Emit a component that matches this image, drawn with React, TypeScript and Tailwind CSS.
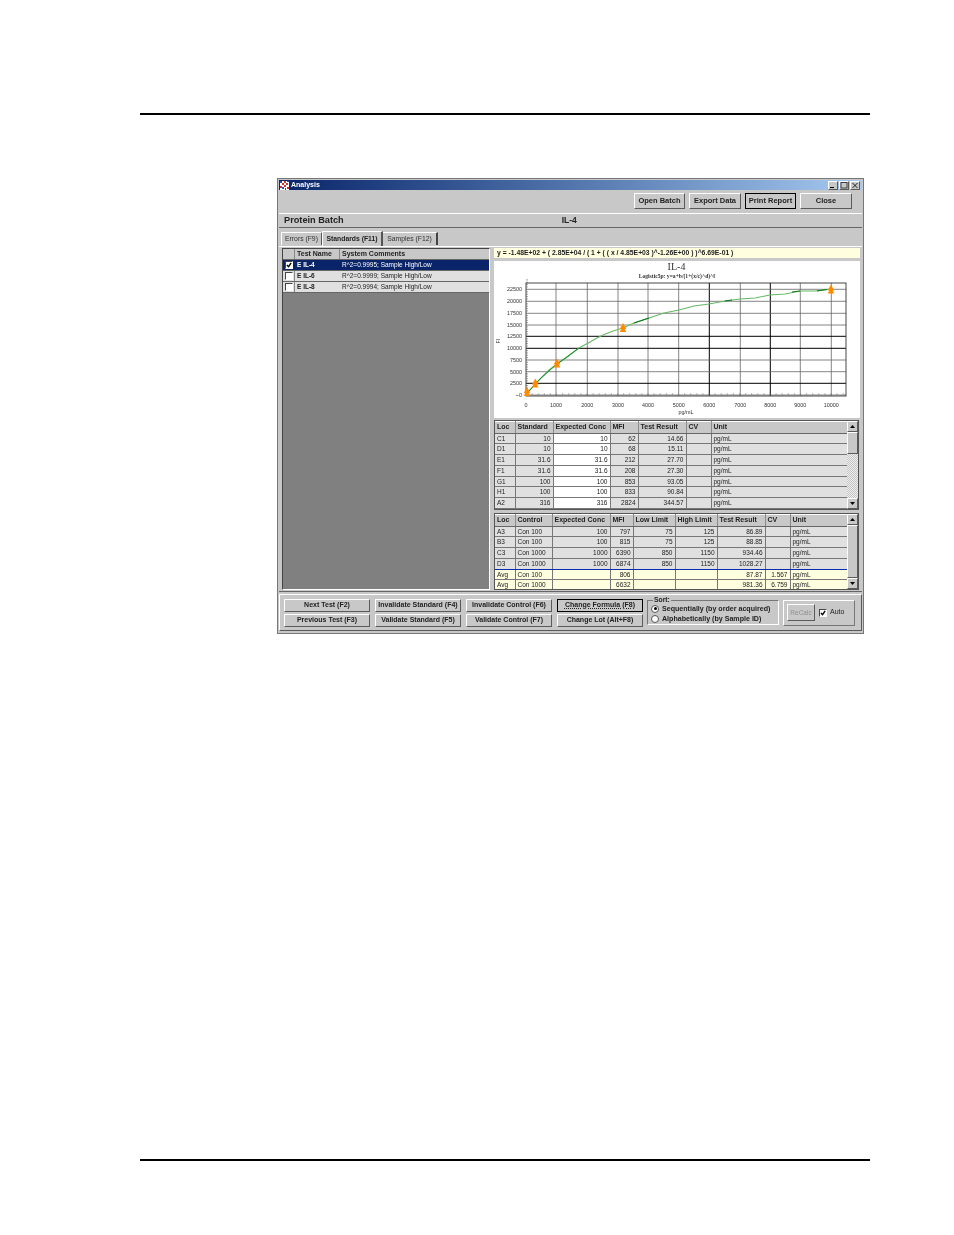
import React from 'react';

const bevel = 'border border-t-white border-l-white border-r-[#5a5a5a] border-b-[#5a5a5a]';
const sunken = 'border border-t-[#444] border-l-[#444] border-r-white border-b-white';

const Btn: React.FC<{ label: string; w: string; cls?: string }> = ({ label, w, cls = '' }) => (
  <div className={`${w} h-[16px] shrink-0 flex items-center justify-center bg-[#c8c8c8] font-bold text-[7.5px] text-[#222] ${bevel} ${cls}`}>
    {label}
  </div>
);

const SmallBtn: React.FC<{ label: string; cls?: string }> = ({ label, cls = '' }) => (
  <div className={`w-[86px] h-[13px] flex items-center justify-center bg-[#c8c8c8] font-bold text-[7px] text-[#222] ${bevel} ${cls}`}>
    {label}
  </div>
);

const WinCtl: React.FC<{ children: React.ReactNode }> = ({ children }) => (
  <div className={`w-[10px] h-[9px] bg-[#c8c8c8] flex items-center justify-center ${bevel}`}>
    <svg width="8" height="7" viewBox="0 0 8 7">{children}</svg>
  </div>
);

const Arrow: React.FC<{ up?: boolean }> = ({ up }) => (
  <div className={`h-[11px] shrink-0 bg-[#c8c8c8] flex items-center justify-center ${bevel}`}>
    <svg width="5" height="3" viewBox="0 0 5 3">
      <path d={up ? 'M2.5 0 L5 3 L0 3 Z' : 'M0 0 L5 0 L2.5 3 Z'} fill="#000" />
    </svg>
  </div>
);

const cell = 'border-r border-b border-[#777] px-[2px] h-[10.75px] leading-[9.7px] overflow-hidden whitespace-nowrap text-[6.5px] text-[#222]';
const head = 'border-r border-[#8a8a8a] px-[2px] h-[11px] text-left font-bold text-[7px] text-[#222] bg-[#c8c8c8] border-t border-t-white border-b border-b-[#666] whitespace-nowrap overflow-hidden';

const standards = [
  ['C1', '10', '10', '62', '14.66', '', 'pg/mL'],
  ['D1', '10', '10', '68', '15.11', '', 'pg/mL'],
  ['E1', '31.6', '31.6', '212', '27.70', '', 'pg/mL'],
  ['F1', '31.6', '31.6', '208', '27.30', '', 'pg/mL'],
  ['G1', '100', '100', '853', '93.05', '', 'pg/mL'],
  ['H1', '100', '100', '833', '90.84', '', 'pg/mL'],
  ['A2', '316', '316', '2824', '344.57', '', 'pg/mL'],
  ['', '', '', '', '', '', ''],
];

const controls = [
  ['A3', 'Con 100', '100', '797', '75', '125', '86.89', '', 'pg/mL'],
  ['B3', 'Con 100', '100', '815', '75', '125', '88.85', '', 'pg/mL'],
  ['C3', 'Con 1000', '1000', '6390', '850', '1150', '934.46', '', 'pg/mL'],
  ['D3', 'Con 1000', '1000', '6874', '850', '1150', '1028.27', '', 'pg/mL'],
  ['Avg', 'Con 100', '', '806', '', '', '87.87', '1.567', 'pg/mL'],
  ['Avg', 'Con 1000', '', '6632', '', '', '981.36', '6.759', 'pg/mL'],
];

const xLines = [556, 587.3, 618, 648, 678.7, 709.3, 740.3, 770.3, 800.3, 831.3];
const xBlack = [709.3, 770.3];
const yLines: [number, string, boolean][] = [
  [289.3, '22500', false],
  [301.3, '20000', false],
  [313.3, '17500', false],
  [325, '15000', false],
  [336.3, '12500', true],
  [348.3, '10000', true],
  [360, '7500', false],
  [371.7, '5000', false],
  [383.3, '2500', true],
  [395, '0', false],
];
const curve = '527,393 531,389 535,384 541,378 549,370 557,364 566,358 579,348 590,342 595,339 603,335 613,331 623,328 634,323 649,318 664,313 679,310 694,306 709,304 725,301 740,299 755,298 770,295 785,294 800,291 815,291 831,289';
const marks: [number, number][] = [[527, 392], [535.3, 383.5], [557, 363.5], [623, 328], [831, 289.5]];

const Chart: React.FC = () => {
  const ticks: number[] = [];
  for (let x = 526; x < 846; x += 6.1) ticks.push(x);
  return (
    <svg viewBox="494 261 366 157" className="w-[366px] h-[157px] block bg-white">
      {xLines.map(x => (
        <line key={x} x1={x} x2={x} y1={283} y2={396} stroke={xBlack.includes(x) ? '#000' : '#666'} strokeWidth={xBlack.includes(x) ? 1 : 0.8} />
      ))}
      {yLines.map(([y, , black]) => (
        <line key={y} x1={526} x2={846} y1={y} y2={y} stroke={black ? '#000' : '#666'} strokeWidth={black ? 1 : 0.8} />
      ))}
      <rect x={526} y={283} width={320} height={113} fill="none" stroke="#333" strokeWidth={0.9} />
      {ticks.map(x => (
        <line key={x} x1={x} x2={x} y1={395.5} y2={393} stroke="#777" strokeWidth={0.5} />
      ))}
      {yLines.map(([y]) => [2.35, 4.7, 7.05, 9.4].map(d => (
        <line key={`${y}-${d}`} x1={526} x2={528} y1={y - d} y2={y - d} stroke="#444" strokeWidth={0.5} />
      )))}
      <polyline points={curve} fill="none" stroke="#66b866" strokeWidth={1.1} />
      <polyline points="527,393 541,378 557,364 579,348" fill="none" stroke="#1a8a2a" strokeWidth={1} />
      <polyline points="634,323 649,318" fill="none" stroke="#0a7a1a" strokeWidth={1.1} />
      <polyline points="725,301 732,300" fill="none" stroke="#0a7a1a" strokeWidth={1.1} />
      <polyline points="792,292 800,291" fill="none" stroke="#0a7a1a" strokeWidth={1.1} />
      <polyline points="817,291 827,289.5" fill="none" stroke="#0a7a1a" strokeWidth={1.1} />
      {marks.map(([x, y]) => (
        <g key={x} fill="#ff8a00">
          <path d={`M${x} ${y - 5} L${x + 3.3} ${y + 1} L${x - 3.3} ${y + 1} Z`} />
          <path d={`M${x} ${y - 2} L${x + 3.3} ${y + 4} L${x - 3.3} ${y + 4} Z`} />
        </g>
      ))}
      <g fontFamily="'Liberation Sans', sans-serif" fontSize="5.4" fill="#333">
        {yLines.map(([y, l]) => (
          <text key={l} x={522} y={y + 2} textAnchor="end">{l === '0' ? '~0' : l}</text>
        ))}
        <text x={526} y={407} textAnchor="middle">0</text>
        {xLines.map((x, i) => (
          <text key={x} x={x} y={407} textAnchor="middle">{(i + 1) * 1000}</text>
        ))}
        <text x={686} y={414} textAnchor="middle">pg/mL</text>
        <text x={500} y={341} textAnchor="middle" transform="rotate(-90 500 341)">FI</text>
      </g>
      <text x={676.5} y={269.5} textAnchor="middle" fontFamily="'Liberation Serif', serif" fontSize="10" fill="#333">IL-4</text>
      <text x={677} y={277.5} textAnchor="middle" fontFamily="'Liberation Serif', serif" fontSize="5.6" fontWeight="bold" fill="#333">Logistic5p: y=a+b/(1+(x/c)^d)^f</text>
    </svg>
  );
};

const Radio: React.FC<{ on?: boolean }> = ({ on }) => (
  <div className="w-[8px] h-[8px] rounded-full bg-white border border-[#555] flex items-center justify-center shrink-0">
    {on && <div className="w-[3px] h-[3px] rounded-full bg-black" />}
  </div>
);

const Check: React.FC<{ on?: boolean }> = ({ on }) => (
  <div className={`w-[8px] h-[8px] bg-white flex items-center justify-center ${sunken}`}>
    {on && (
      <svg width="6" height="6" viewBox="0 0 7 7">
        <path d="M1 3.5 L3 5.5 L6 1" fill="none" stroke="#000" strokeWidth="1.6" />
      </svg>
    )}
  </div>
);

const tests = [
  ['E IL-4', 'R^2=0.9995; Sample High/Low', true],
  ['E IL-6', 'R^2=0.9999; Sample High/Low', false],
  ['E IL-8', 'R^2=0.9994; Sample High/Low', false],
] as const;

export default function App() {
  return (
    <div className="w-[954px] h-[1235px] bg-white overflow-hidden font-['Liberation_Sans',Arial,sans-serif] pt-[113px]">
      <div className="ml-[140px] w-[730px] h-[2px] bg-black" />

      <div className="ml-[277px] mt-[63px] w-[587px] h-[456px] bg-[#c8c8c8] border border-[#777] p-[1px] flex flex-col blur-[0.35px]">
        {/* title bar */}
        <div className="h-[10px] shrink-0 flex items-center bg-gradient-to-r from-[#0a246a] to-[#a6caf0] pl-[1px] pr-[2px]">
          <svg width="9" height="9" viewBox="0 0 9 9" className="shrink-0">
            <rect width="9" height="9" fill="#fff" />
            <path d="M4 0h2v2h-2z M2 2h2v2h-2z M6 2h2v2h-2z M0 5h2v2h-2z M4 4h2v2h-2z M7 6h2v2h-2z" fill="#d03030" />
            <path d="M0 0h2v2h-2z M2 6h2v2h-2z M5 7h1v2h-1z M7 0h2v1h-2z" fill="#3050b0" />
          </svg>
          <span className="ml-[2px] text-[7px] font-bold text-white">Analysis</span>
          <div className="ml-auto flex gap-[1px]">
            <WinCtl><rect x="1" y="5" width="4" height="1" fill="#000" /></WinCtl>
            <WinCtl><rect x="1" y="0.5" width="6" height="5.5" fill="none" stroke="#222" strokeWidth="0.8" /></WinCtl>
            <WinCtl><path d="M1.5 1 L6.5 6 M6.5 1 L1.5 6" stroke="#222" strokeWidth="1" /></WinCtl>
          </div>
        </div>

        {/* toolbar */}
        <div className="h-[22px] shrink-0 flex items-center justify-end gap-[4px] pr-[10px]">
          <Btn label="Open Batch" w="w-[51px]" />
          <Btn label="Export Data" w="w-[52px]" />
          <Btn label="Print Report" w="w-[51px]" cls="!border-black" />
          <Btn label="Close" w="w-[52px]" />
        </div>

        {/* batch title */}
        <div className="h-[15px] mt-[1px] shrink-0 flex items-center border-b border-b-[#666] border-t border-t-white">
          <span className="ml-[5px] text-[9.2px] font-bold text-[#222]">Protein Batch</span>
          <span className="ml-[218px] text-[8.5px] font-bold text-[#222]">IL-4</span>
        </div>

        {/* tabs */}
        <div className="h-[19px] shrink-0 flex items-end pl-[2px] border-b border-b-white">
          <div className="w-[41px] h-[13px] mb-[1px] border-t border-l border-t-white border-l-white border-r border-r-[#555] flex items-center justify-center text-[6.8px] text-[#333]">Errors (F9)</div>
          <div className="w-[61px] h-[15px] border-t border-l border-t-white border-l-white border-r-2 border-r-[#555] flex items-center justify-center text-[6.8px] font-bold text-[#222]">Standards (F11)</div>
          <div className="w-[55px] h-[13px] mb-[1px] border-t border-t-white border-r-2 border-r-[#444] flex items-center justify-center text-[6.8px] text-[#333]">Samples (F12)</div>
        </div>

        {/* content */}
        <div className="h-[345px] shrink-0 flex gap-[4px] pl-[3px] pt-[1px] border-b border-b-[#666]">
          {/* left list */}
          <div className={`w-[208px] h-[342px] shrink-0 bg-[#808080] flex flex-col ${sunken}`}>
            <div className="h-[11px] shrink-0 flex items-center bg-[#c8c8c8] font-bold text-[7px] text-[#222] border-b border-[#666]">
              <div className="w-[12px] h-full border-r border-[#888]" />
              <div className="w-[45px] h-full pl-[2px] border-r border-[#888] leading-[10px]">Test Name</div>
              <div className="pl-[2px] leading-[10px]">System Comments</div>
            </div>
            {tests.map(([name, comment, selected]) => (
              <div key={name} className={`h-[11px] shrink-0 flex items-center text-[6.5px] border-b border-[#666] ${selected ? 'bg-[#0a246a] text-white' : 'bg-[#e0e0e0] text-[#222]'}`}>
                <div className={`w-[12px] h-full flex items-center justify-center ${selected ? '' : 'border-r border-[#888]'}`}>
                  <Check on={selected} />
                </div>
                <div className="w-[45px] pl-[2px] font-bold">{name}</div>
                <div className="pl-[2px]">{comment}</div>
              </div>
            ))}
          </div>

          {/* right side */}
          <div className="w-[367px] shrink-0 flex flex-col">
            <div className="h-[10px] w-[366px] shrink-0 bg-[#ffffe0] pl-[3px] flex items-center font-bold text-[6.8px] text-[#222] whitespace-nowrap">
              y = -1.48E+02 + ( 2.85E+04 / ( 1 + ( ( x / 4.85E+03 )^-1.26E+00 ) )^6.69E-01 )
            </div>
            <div className="mt-[3px] shrink-0">
              <Chart />
            </div>

            {/* standards table */}
            <div className="h-[90px] mt-[2px] shrink-0 w-[365px] flex bg-[#e0e0e0] border border-[#555]">
              <div className="w-[353px] overflow-hidden">
                <table className="table-fixed border-collapse w-[353px]">
                  <colgroup>
                    <col className="w-[20px]" />
                    <col className="w-[38px]" />
                    <col className="w-[57px]" />
                    <col className="w-[28px]" />
                    <col className="w-[48px]" />
                    <col className="w-[25px]" />
                    <col className="w-[137px]" />
                  </colgroup>
                  <thead>
                    <tr>
                      {['Loc', 'Standard', 'Expected Conc', 'MFI', 'Test Result', 'CV', 'Unit'].map(h => (
                        <th key={h} className={head}>{h}</th>
                      ))}
                    </tr>
                  </thead>
                  <tbody>
                    {standards.map((r, i) => (
                      <tr key={i}>
                        {r.map((c, j) => (
                          <td key={j} className={`${cell} ${j === 2 ? 'bg-white' : 'bg-[#e0e0e0]'} ${j >= 1 && j <= 4 ? 'text-right' : 'text-left'}`}>{c}</td>
                        ))}
                      </tr>
                    ))}
                  </tbody>
                </table>
              </div>
              <div className="w-[11px] shrink-0 flex flex-col bg-[#e4e4e4]">
                <Arrow up />
                <div className={`h-[22px] shrink-0 bg-[#c8c8c8] ${bevel}`} />
                <div className="flex-1 bg-[repeating-conic-gradient(#c4c4c4_0_25%,#efefef_0_50%)] bg-[length:2px_2px]" />
                <Arrow />
              </div>
            </div>

            {/* controls table */}
            <div className="h-[77px] mt-[3px] shrink-0 w-[365px] flex bg-[#e0e0e0] border border-[#555]">
              <div className="w-[353px] overflow-hidden">
                <table className="table-fixed border-collapse w-[353px]">
                  <colgroup>
                    <col className="w-[20px]" />
                    <col className="w-[37px]" />
                    <col className="w-[58px]" />
                    <col className="w-[23px]" />
                    <col className="w-[42px]" />
                    <col className="w-[42px]" />
                    <col className="w-[48px]" />
                    <col className="w-[25px]" />
                    <col className="w-[58px]" />
                  </colgroup>
                  <thead>
                    <tr>
                      {['Loc', 'Control', 'Expected Conc', 'MFI', 'Low Limit', 'High Limit', 'Test Result', 'CV', 'Unit'].map(h => (
                        <th key={h} className={head}>{h}</th>
                      ))}
                    </tr>
                  </thead>
                  <tbody>
                    {controls.map((r, i) => (
                      <tr key={i}>
                        {r.map((c, j) => (
                          <td key={j} className={`${cell} ${i > 3 ? 'bg-[#ffffe0]' : 'bg-[#e0e0e0]'} ${i === 3 ? '!border-b-[#0a2ab0]' : ''} ${j >= 2 && j <= 7 ? 'text-right' : 'text-left'}`}>{c}</td>
                        ))}
                      </tr>
                    ))}
                  </tbody>
                </table>
              </div>
              <div className="w-[11px] shrink-0 flex flex-col bg-[#c8c8c8]">
                <Arrow up />
                <div className={`flex-1 bg-[#c8c8c8] ${bevel}`} />
                <Arrow />
              </div>
            </div>
          </div>
        </div>

        {/* bottom buttons */}
        <div className={`mt-[2px] h-[37px] shrink-0 flex items-center pl-[4px] ${bevel}`}>
          <div className="grid grid-cols-[repeat(4,86px)] grid-rows-[13px_13px] gap-x-[5px] gap-y-[2px]">
            <SmallBtn label="Next Test (F2)" />
            <SmallBtn label="Invalidate Standard (F4)" />
            <SmallBtn label="Invalidate Control (F6)" />
            <SmallBtn label="Change Formula (F8)" cls="!border-black underline decoration-dotted" />
            <SmallBtn label="Previous Test (F3)" />
            <SmallBtn label="Validate Standard (F5)" />
            <SmallBtn label="Validate Control (F7)" />
            <SmallBtn label="Change Lot (Alt+F8)" />
          </div>
          <div className="relative ml-[4px] w-[132px] h-[25px] border border-t-[#777] border-l-[#777] border-r-white border-b-white flex flex-col justify-center gap-[2px] pl-[3px] pt-[2px] text-[7.1px] font-bold text-[#222]">
            <span className="absolute -top-[5px] left-[5px] bg-[#c8c8c8] px-[1px] text-[6.8px] font-bold leading-[8px]">Sort:</span>
            <div className="flex items-center gap-[3px] leading-[8px]"><Radio on />Sequentially (by order acquired)</div>
            <div className="flex items-center gap-[3px] leading-[8px]"><Radio />Alphabetically (by Sample ID)</div>
          </div>
          <div className="ml-[4px] w-[72px] h-[26px] border border-t-white border-l-white border-r-[#777] border-b-[#777] flex items-center pl-[3px]">
            <div className={`w-[28px] h-[17px] flex items-center justify-center text-[6.5px] text-[#8e8e8e] bg-[#c8c8c8] ${bevel}`}>ReCalc</div>
            <div className="ml-[4px]"><Check on /></div>
            <span className="ml-[3px] text-[7px] text-[#222]">Auto</span>
          </div>
        </div>
      </div>

      <div className="ml-[140px] mt-[525px] w-[730px] h-[2px] bg-black" />
    </div>
  );
}
